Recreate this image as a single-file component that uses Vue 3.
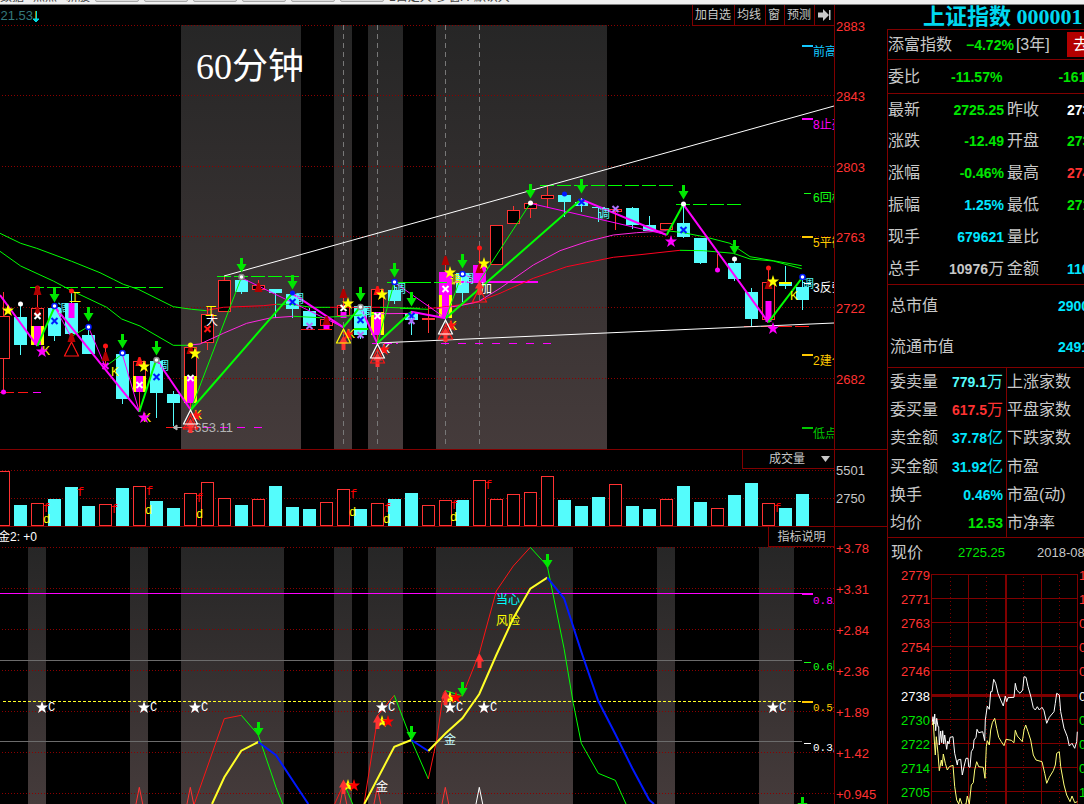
<script setup>
const cx = (i) => 3.5 + 17 * i

// [kind, body top, body bottom, wick top, wick bottom]
const candles = [
  ['h', 316, 359, 292, 390], ['c', 317, 345, 303, 355], ['h', 308, 345, 287, 345], ['c', 308, 336, 305, 341],
  ['c', 303, 334, 291, 334], ['c', 335, 354, 326, 354], ['h', 353, 354, 345, 367], ['c', 354, 399, 353, 404],
  ['h', 361, 392, 358, 410], ['c', 361, 393, 359, 418], ['c', 394, 403, 391, 426], ['h', 347, 403, 346, 410],
  ['h', 314, 343, 306, 350], ['h', 280, 312, 276, 312], ['c', 280, 292, 277, 294], ['h', 285, 290, 280, 290],
  ['c', 289, 293, 289, 318], ['c', 294, 309, 293, 318], ['c', 311, 326, 308, 326], ['h', 319, 326, 315, 326],
  ['h', 305, 316, 298, 316], ['c', 306, 335, 306, 339], ['h', 289, 335, 287, 343], ['c', 290, 301, 282, 304],
  ['c', 313, 320, 311, 335], ['h', 318, 320, 304, 333], ['m', 272, 318, 260, 318], ['c', 273, 293, 273, 302],
  ['m', 265, 282, 248, 282], ['h', 225, 265, 225, 265], ['h', 210, 224, 206, 224], ['h', 203, 209, 203, 218],
  ['h', 195, 199, 186, 208], ['c', 195, 202, 194, 217], ['c', 202, 206, 198, 212], ['c', 207, 208, 207, 222],
  ['h', 209, 212, 209, 230], ['c', 208, 225, 207, 229], ['c', 225, 231, 216, 231], ['h', 223, 230, 223, 230],
  ['c', 223, 237, 204, 238], ['c', 238, 263, 238, 264], ['h', 263, 264, 254, 270], ['c', 263, 279, 260, 281],
  ['c', 292, 319, 288, 326], ['h', 282, 320, 268, 320], ['c', 282, 286, 266, 289], ['c', 287, 300, 278, 310],
]
// [index, top, bottom] of the yellow part of a candle
const cores = [[2, 326, 345], [8, 376, 392], [11, 376, 403], [22, 312, 335], [26, 295, 318]]
const slivers = [[4, 303, 318], [45, 301, 322], [20, 312, 318], [19, 324, 329], [26, 295, 318]]

const volumes = [
  471, 505, 503, 499, 487, 506, 504, 488, 486, 501, 508, 493, 482, 498, 505, 499, 486, 507, 509, 502, 489, 509, 503, 499,
  493, 505, 500, 500, 480, 499, 494, 492, 476, 500, 506, 497, 484, 506, 509, 499, 486, 502, 508, 495, 483, 503, 508, 494,
]
const hollow = (i) => candles[i][0] !== 'c'
const volF = [[43, 512], [77, 496], [111, 513], [146, 495], [196, 502], [350, 498], [384, 512], [451, 509], [485, 489], [774, 512]]
const volD = [[43, 523], [145, 514], [196, 518], [349, 516], [383, 523], [450, 521]]

const bands = [[181, 120], [334, 18], [368, 35], [436, 171]]
const lowBands = [[28, 18], [130, 18], [181, 103], [334, 18], [368, 35], [436, 137], [657, 18], [759, 35]]

const G = '#00ff00', M = '#ff00ff', R = '#ff1414', Y = '#ffff00', W = '#ffffff', C = '#54fcfc', B = '#0018ff'

// Points are kept in thirds of a unit, relative to an origin.
const line = (ox, oy, p) => p.map(([x, y]) => `${(ox + x / 3).toFixed(1)},${(oy + y / 3).toFixed(1)}`).join(' ')
const L = (c, w, ox, oy, ...p) => ({ c, w, p: line(ox, oy, p) })

const averages = [
  L(G, 1, 0, 220, [0, 40], [62, 70], [110, 85], [215, 124], [300, 158], [340, 178], [370, 193], [415, 208], [520, 260], [575, 268], [620, 272]),
  L(G, 1, 0, 220, [0, 94], [62, 138], [160, 183], [215, 212], [320, 262], [365, 297], [420, 318], [520, 376], [575, 376]),
  L('#ff0020', 1, 180, 220, [80, 271], [130, 262], [250, 257], [290, 253]),
  L(G, 1, 180, 220, [290, 253], [330, 253], [395, 262], [450, 262]),
  L('#ff0020', 1, 180, 220, [450, 262], [600, 262]),
  L(G, 1, 180, 220, [600, 262], [720, 265]),
  L('#ff28e0', 1, 180, 220, [20, 376], [60, 372], [130, 340], [200, 310], [270, 294], [340, 289]),
  L(G, 1, 180, 220, [340, 289], [420, 293], [500, 288], [600, 281]),
  L('#ff28e0', 1, 180, 220, [600, 281], [720, 280]),
  L(G, 1, 400, 160, [0, 445], [85, 448]),
  L('#ff0020', 1, 400, 160, [85, 446], [140, 440], [225, 428], [300, 400], [400, 355], [500, 320], [640, 292], [720, 284], [840, 271]),
  L('#ff28e0', 1, 400, 160, [110, 446], [180, 437], [235, 425], [300, 385], [400, 315], [480, 272], [560, 245], [640, 225], [710, 218], [800, 212]),
  L(G, 1, 600, 160, [200, 212], [250, 218], [320, 232], [390, 250], [450, 290], [520, 302], [605, 317]),
  L(G, 1, 600, 160, [240, 271], [310, 272], [400, 280], [450, 297], [520, 303], [605, 326]),
]
const swings = [
  L(M, 1, 0, 220, [164, 260], [213, 350]), L(G, 1, 0, 220, [213, 350], [265, 320]),
  L(M, 1, 0, 220, [265, 320], [316, 440]), L(G, 1, 0, 220, [316, 440], [367, 402]),
  L(M, 1, 0, 220, [367, 402], [418, 575]), L(G, 1, 180, 220, [32, 570], [184, 173]),
  L(M, 1, 180, 220, [184, 173], [490, 322]), L(G, 1, 180, 220, [592, 370], [643, 187]),
  L(M, 1, 180, 220, [643, 187], [797, 295]), L(G, 1, 400, 160, [137, 475], [187, 340]),
  L(M, 1, 400, 160, [187, 340], [237, 366]), L(G, 1, 400, 160, [237, 366], [391, 130]),
  L(M, 1, 400, 160, [391, 130], [800, 224]),
  L(M, 2, 0, 220, [0, 225], [112, 378]), L(G, 2, 0, 220, [112, 378], [164, 260]),
  L(M, 2, 0, 220, [164, 260], [418, 575]), L(G, 2, 0, 220, [418, 575], [469, 418]),
  L(M, 2, 0, 220, [469, 418], [571, 568]), L(G, 2, 180, 220, [32, 570], [337, 220]),
  L(M, 2, 180, 220, [337, 220], [490, 322]), L(G, 2, 180, 220, [490, 322], [541, 260]),
  L(M, 2, 180, 220, [541, 260], [592, 370]), L(G, 2, 180, 220, [592, 370], [694, 275]),
  L(M, 2, 180, 220, [694, 275], [797, 295]), L(G, 2, 400, 160, [137, 475], [544, 118]),
  L(M, 2, 400, 160, [544, 118], [800, 225]), L(G, 2, 600, 160, [200, 225], [250, 133]),
  L(M, 2, 600, 160, [250, 133], [505, 487]), L(G, 2, 600, 160, [505, 487], [605, 355]),
]
// [colour, x1, x2, y, dash, width]
const levels = [
  [G, 30, 163, 287.5, '14 3', 1], [G, 217, 299, 276.5, '14 3', 1], [G, 387, 418, 282.5, '14 3', 1],
  [G, 400, 447, 282.5, '14 3', 1], [G, 540, 673, 185.5, '14 3', 1], [G, 676, 741, 204.5, '14 3', 1],
  [R, 0, 28, 392.5, '14 4', 1], [M, 33, 41, 392.5, '', 1], [R, 166, 200, 427.5, '', 1], [M, 203, 262, 427.5, '8 9', 1],
  [R, 301, 334, 329.5, '14 3', 1], [M, 455, 538, 282, '', 2], [M, 441, 551, 343.5, '8 9', 1],
  [R, 744, 809, 326.5, '14 3', 1], [G, 354, 368, 329, '', 2], [M, 372, 398, 343.5, '8 4', 1],
]
const red = '#b00000'
// [symbol, x, y, colour]
const marks = [
  ['star', 8, 310, Y], ['dot', 20.5, 304, W], ['dot', 3.5, 392, M], ['dot', 37.5, 288, R], ['tree', 37.5, 291, red], ['tree', 37.5, 312, red], ['x', 37.5, 316, W],
  ['star', 42, 351, M], ['x', 54.5, 321, B], ['ring', 54.5, 306, B], ['down', 54.5, 295, ''], ['dot', 71.5, 291, R],
  ['tri', 71.5, 349, R], ['tree', 71.5, 338, red], ['ring', 88.5, 327, B], ['down', 88.5, 314, ''], ['dot', 105.5, 346, R],
  ['tree', 105.5, 357, red], ['x', 105.5, 366, M], ['ring', 122.5, 353, B], ['down', 122.5, 341, ''], ['x', 139.5, 385, W],
  ['tree', 139.5, 362, R], ['star', 144, 366, Y], ['star', 144, 417, M], ['ring', 156.5, 360, '#888'], ['down', 156.5, 348, ''], ['x', 156.5, 377, B],
  ['tree', 190.5, 350, red], ['dot', 190.5, 345, Y], ['x', 190.5, 378, W], ['star', 195, 353, Y], ['star', 196, 415, R],
  ['up', 190.5, 426, ''], ['tri', 190.5, 422, R], ['tri', 190.5, 417, W], ['x', 207.5, 329, R],
  ['ring', 241.5, 277, '#888'], ['down', 241.5, 265, ''], ['tree', 258.5, 288, red], ['dot', 292.5, 293, B], ['x', 292.5, 302, B], ['down', 292.5, 282, ''],
  ['x', 309.5, 326, '#b070ff'], ['tree', 326.5, 321, red], ['tree', 343.5, 294, red], ['x', 343.5, 308, W], ['star', 348, 303, Y],
  ['star', 348, 334, R], ['up', 343.5, 343, ''], ['tri', 343.5, 336, Y], ['ring', 360.5, 307, '#888'], ['down', 360.5, 294, ''], ['x', 360.5, 320, B], ['x', 360.5, 335, '#b070ff'],
  ['tree', 377.5, 291, R], ['x', 377.5, 316, W], ['star', 382, 294, Y], ['star', 384, 349, R], ['up', 377.5, 360, ''], ['tri', 377.5, 356, R], ['tri', 377.5, 351, W],
  ['ring', 394.5, 282, B], ['down', 394.5, 270, ''], ['down', 411.5, 299, ''], ['x', 411.5, 316, B], ['x', 411.5, 321, '#b070ff'],
  ['tree', 445.5, 261, red], ['x', 445.5, 289, W], ['star', 450, 272, Y], ['star', 451, 325, R], ['up', 445.5, 335, ''], ['tri', 445.5, 332, R], ['tri', 445.5, 327, W],
  ['ring', 462.5, 274, B], ['down', 462.5, 261, ''], ['dot', 479.5, 248, R], ['tree', 479.5, 269, red], ['star', 484, 263, Y], ['tri', 479.5, 295, R], ['up', 479.5, 288, ''],
  ['dot', 530.5, 203, W], ['down', 530.5, 191, ''], ['dot', 564.5, 194, B], ['down', 581.5, 186, ''], ['x', 581.5, 202, B], ['x', 615.5, 209, '#b070ff'],
  ['star', 671, 241, M], ['dot', 683.5, 204, W], ['x', 683.5, 230, B], ['down', 683.5, 192, ''], ['dot', 717.5, 270, M],
  ['dot', 734.5, 259, W], ['down', 734.5, 247, ''], ['dot', 768.5, 268, R], ['tree', 768.5, 285, red], ['star', 773, 281, Y], ['star', 773, 328, M],
  ['ring', 802.5, 277, B],
]
const big = (k) => ['down', 'up', 'tri'].includes(k)
// [text, x, baseline, colour]
const notes = [
  ['调', 57, 313, C], ['工', 69, 302, Y], ['K', 42, 355, Y], ['K', 111, 376, Y], ['K', 143, 422, Y], ['调', 157, 370, C], ['K', 194, 419, Y],
  ['工', 205, 316, Y], ['大', 206, 325, W], ['调', 292, 303, C], ['调', 360, 316, C], ['调', 394, 293, C], ['K', 347, 338, Y], ['K', 382, 353, W], ['K', 449, 330, Y],
  ['调', 450, 284, Y], ['调', 462, 283, C], ['加', 480, 293, W], ['调', 598, 218, C], ['K', 790, 300, Y], ['调', 802, 288, C],
]
const stages = [
  ['前高', 56, 46, '#14c8ff', 2], ['8止盈', 129, 119, M, 2], ['6回档', 202, 193.5, '#14ff14', 1], ['5平衡', 247, 237, '#ffc800', 2],
  ['3反弹', 292, 283.5, W, 1], ['2建仓', 365, 355, '#ffc800', 2], ['低点', 438, 428, '#00c800', 2],
]
const ratios = [['0.8止', 604, 594, M, 2], ['0.6回', 670, 662.5, '#14ff14', 1], ['0.5平', 711, 702, '#ffc800', 2], ['0.3反', 751, 743.5, W, 1]]
const priceAxis = [[2883, 25.5], [2843, 95.5], [2803, 166.5], [2763, 236.5], [2722, 307.5], [2682, 378.5]]
const oscAxis = [['+3.78', 547.5], ['+3.31', 588.5], ['+2.84', 629.5], ['+2.36', 670.5], ['+1.89', 711.5], ['+1.42', 752.5], ['+0.945', 793.5]]

const osc = [
  L(R, 1, 0, 680, [583, 372], [673, 116], [724, 106]),
  L(G, 1, 0, 680, [724, 106], [775, 165], [828, 322], [848, 372]),
  L('#ffff28', 2, 0, 680, [636, 372], [673, 292], [724, 212], [775, 186]),
  L(B, 2, 0, 680, [775, 186], [828, 226], [925, 372]),
  L(R, 1, 0, 680, [1004, 372], [1028, 318], [1036, 320]), L(G, 1, 0, 680, [1036, 320], [1058, 372]),
  L(R, 1, 0, 680, [1092, 372], [1134, 106], [1183, 46]), L(G, 1, 0, 680, [1183, 46], [1234, 180], [1285, 297]),
  L('#ffff28', 2, 0, 680, [1093, 372], [1183, 200], [1234, 180]), L(B, 2, 0, 680, [1234, 180], [1285, 213]),
  L(R, 1, 380, 530, [145, 747], [170, 630], [190, 490], [197, 480]), L(G, 1, 380, 530, [197, 482], [247, 498]),
  L(R, 1, 380, 530, [247, 498], [298, 370], [349, 183], [400, 108], [451, 52]),
  L(G, 1, 380, 530, [451, 52], [502, 108], [552, 355], [580, 520], [604, 640], [655, 730], [706, 751], [738, 822]),
  L('#ffff28', 2, 380, 530, [145, 663], [197, 610], [247, 565], [298, 492], [349, 375], [400, 265], [451, 176], [502, 143]),
  L(B, 2, 380, 530, [502, 143], [552, 205], [604, 365], [655, 513], [706, 612], [757, 715], [808, 810], [822, 822]),
  ...[418, 571, 1030, 1132, 1336].map((x) => L('#ff3232', 1, 0, 680, [x - 10, 372], [x, 322], [x + 10, 372])),
  L(W, 1, 0, 680, [1428, 372], [1438, 322], [1448, 372]),
]
const oscMarks = [
  ['down', 258.5, 729], ['down', 411.5, 733], ['down', 547.5, 561], ['down', 462.5, 689], ['down', 802.5, 804],
  ['star', 348, 785, Y], ['star', 354, 785, '#ff0000'], ['star', 382, 721, Y], ['star', 388, 721, '#ff0000'], ['star', 450, 697, Y], ['star', 456, 697, '#ff0000'],
  ['up', 343.5, 787], ['up', 377.5, 722], ['up', 445.5, 698], ['up', 479.5, 661],
  ...[42, 144, 195, 382, 450, 484, 773].map((x) => ['star', x, 707, W]),
]
const cMarks = [48, 150, 201, 388, 456, 490, 779]

const quote = [
  ['最新', '2725.25', 'g', '昨收', '2738', 'w'], ['涨跌', '-12.49', 'g', '开盘', '2736', 'g'],
  ['涨幅', '-0.46%', 'g', '最高', '2744', 'r'], ['振幅', '1.25%', 'c', '最低', '2710', 'g'],
  ['现手', '679621', 'c', '量比', '', 'g'], ['总手', '10976万', 's', '金额', '1162亿', 'c'],
]
const caps = [['总市值', '29003亿'], ['流通市值', '24917亿']]
const flows = [
  ['委卖量', '779.1万', 'a', '上涨家数'], ['委买量', '617.5万', 'r', '平盘家数'], ['卖金额', '37.78亿', 'c', '下跌家数'],
  ['买金额', '31.92亿', 'c', '市盈'], ['换手', '0.46%', 'c', '市盈(动)'], ['均价', '12.53', 'g', '市净率'],
]
const splitUnit = (v) => [v.replace(/[万亿]/, ''), (v.match(/[万亿]/) || [''])[0]]

const dayAxis = [
  [2779, 574.5, '1', 'r'], [2771, 598.5, '1', 'r'], [2763, 622.5, '0', 'r'], [2754, 646.5, '0', 'r'], [2746, 670.5, '0', 'r'],
  [2738, 695.5, '0', 'w'], [2730, 719.5, '0', 'g'], [2722, 743.5, '0', 'g'], [2714, 767.5, '0', 'g'], [2705, 791.5, '1', 'g'],
]
const dayPrice = line(884, 540, [
  [145, 545], [147, 530], [150, 552], [152, 522], [155, 572], [158, 535], [162, 560], [164, 560], [166, 615], [170, 573], [173, 608], [176, 572], [179, 612], [182, 585], [188, 628], [191, 603], [195, 612], [198, 592], [207, 590], [212, 640], [220, 675],
  [222, 660], [230, 658], [235, 705], [240, 680], [246, 655], [252, 655], [254, 680], [258, 682], [262, 635], [268, 625], [270, 600], [276, 592], [279, 568], [284, 578], [296, 575], [302, 602],
  [304, 540], [310, 498], [316, 508], [320, 455], [324, 455], [329, 418], [335, 430], [342, 460], [350, 480], [358, 498], [364, 468], [368, 485], [372, 473], [390, 472],
  [394, 430], [398, 450], [408, 460], [416, 450], [420, 410], [426, 412], [432, 440], [440, 468], [448, 503], [454, 510], [460, 500], [466, 510],
  [474, 502], [480, 512], [488, 550], [496, 532], [510, 515], [514, 490], [518, 460], [526, 465], [530, 515], [540, 565], [550, 590], [556, 618], [564, 610],
  [572, 625], [578, 605], [580, 575],
])
const dayMean = line(884, 540, [
  [145, 555], [148, 540], [151, 600], [154, 645], [157, 590], [162, 640], [166, 692], [172, 660], [175, 678], [178, 642], [184, 670], [190, 690], [196, 680], [207, 676], [212, 740], [218, 780],
  [224, 792], [228, 775], [235, 795], [246, 792], [250, 768], [256, 792], [262, 735], [268, 728], [272, 690], [278, 665], [284, 680], [298, 682], [303, 715],
  [307, 620], [310, 602], [316, 615], [320, 570], [325, 548], [332, 535], [338, 565], [344, 592], [352, 605], [360, 617], [366, 598], [382, 601], [390, 608],
  [394, 571], [400, 588], [415, 605], [420, 570], [425, 555], [432, 575], [440, 600], [448, 645], [456, 660], [474, 665], [482, 700], [488, 730],
  [496, 712], [508, 692], [514, 675], [518, 640], [526, 635], [530, 680], [540, 735], [548, 765], [558, 785], [564, 768], [572, 788], [580, 785],
])
</script>

<template>
  <div class="app">
    <header class="strip">
      <span>数据</span><span>点点</span><span>新股</span>
      <i class="tab"></i><i class="tab"></i><i class="tab"></i><i class="tab"></i><i class="tab"></i><i class="tab"></i>
      <span>1自定大</span><span>多窗A</span><span>默认大</span>
    </header>
    <div class="body">
      <main class="charts">
        <section class="pane">
          <svg class="plot" viewBox="0 5 887 445">
            <defs>
              <linearGradient id="shade" x1="0" y1="0" x2="0" y2="1">
                <stop offset="0" stop-color="#262626" /><stop offset="1" stop-color="#453b3b" />
              </linearGradient>
              <symbol id="star" viewBox="-7 -7 14 14"><path fill="currentColor" d="M0-6 1.5-1.5H6L2.4 1.4 4 6 0 3.3-4 6-2.4 1.4-6-1.5H-1.5Z" /></symbol>
              <symbol id="down" viewBox="-8 -8 16 16"><path fill="#00e600" d="M-1.5-7h3v6h3.500L0 7.500-5-1h3.500Z" /></symbol>
              <symbol id="up" viewBox="-8 -8 16 16"><path fill="#ff3232" d="M0-7.500 4.500.500h-2.500V7h-4V.500h-2.500Z" /></symbol>
              <symbol id="x" viewBox="-7 -7 14 14"><path stroke="currentColor" stroke-width="2" d="M-3-3 3 3M3-3-3 3" /></symbol>
              <symbol id="dot" viewBox="-7 -7 14 14"><circle r="2.500" fill="currentColor" /></symbol>
              <symbol id="ring" viewBox="-7 -7 14 14"><circle r="2.500" fill="#fff" stroke="currentColor" stroke-width="1.500" /></symbol>
              <symbol id="tree" viewBox="-7 -7 14 14"><path fill="currentColor" d="M-1-5H1L4 4H-4Z" /></symbol>
              <symbol id="tri" viewBox="-8 -8 16 16"><path fill="none" stroke="currentColor" stroke-width="1.200" d="M0-7 7 7H-7Z" /></symbol>
            </defs>
            <rect v-for="b in bands" :key="b[0]" :x="b[0]" y="25" :width="b[1]" height="424" fill="url(#shade)" />
            <line v-for="a in priceAxis" :key="a[0]" x1="2" x2="834" :y1="a[1]" :y2="a[1]" class="grid" />
            <line v-for="x in [343.5, 377.5, 445.5, 479.5]" :key="x" :x1="x" :x2="x" y1="25" y2="448" class="cursor" />
            <g v-for="(k, i) in candles" :key="i">
              <line :x1="cx(i)" :x2="cx(i)" :y1="k[3]" :y2="k[4]" :stroke="k[0] === 'c' ? C : '#ff3232'" />
              <rect v-if="k[0] === 'c'" :x="cx(i) - 6.5" :y="k[1]" width="13" :height="k[2] - k[1]" :fill="C" />
              <rect v-else-if="k[0] === 'm'" :x="cx(i) - 6.5" :y="k[1]" width="13" :height="k[2] - k[1]" :fill="M" />
              <rect v-else :x="cx(i) - 6" :y="k[1] + 0.5" width="12" :height="k[2] - k[1] - 1" fill="#000" stroke="#ff3232" />
            </g>
            <rect v-for="k in cores" :key="'k' + k[0]" :x="cx(k[0]) - 6.5" :y="k[1]" width="13" :height="k[2] - k[1]" :fill="Y" />
            <rect v-for="k in cores" :key="'j' + k[0]" :x="cx(k[0]) - 3.5" :y="k[1]" width="7" :height="k[2] - k[1]" :fill="M" />
            <rect v-for="k in slivers" :key="'s' + k[0]" :x="cx(k[0]) - 3" :y="k[1]" width="6" :height="k[2] - k[1]" :fill="M" />
            <rect x="779" y="282" width="12" height="2" :fill="Y" />
            <line v-for="(l, i) in levels" :key="'l' + i" :x1="l[1]" :x2="l[2]" :y1="l[3]" :y2="l[3]" :stroke="l[0]" :stroke-dasharray="l[4]" :stroke-width="l[5]" />
            <polyline v-for="(l, i) in averages" :key="'a' + i" :points="l.p" :stroke="l.c" :stroke-width="l.w" fill="none" />
            <path d="M224 276 834 106M377 343 834 323" stroke="#fff" />
            <polyline v-for="(l, i) in swings" :key="'w' + i" :points="l.p" :stroke="l.c" :stroke-width="l.w" fill="none" />
            <text v-for="(n, i) in notes" :key="'n' + i" :x="n[1]" :y="n[2]" :fill="n[3]" class="cn">{{ n[0] }}</text>
            <text x="187" y="432" class="num" fill="#b4b4b4">2653.11</text>
            <path d="M173 427.500 177 425v5ZM177 427.500H182" stroke="#b4b4b4" fill="#b4b4b4" />
            <use v-for="(m, i) in marks" :key="'m' + i" :href="'#' + m[0]" :x="m[1] - (big(m[0]) ? 8 : 7)" :y="m[2] - (big(m[0]) ? 8 : 7)" :width="big(m[0]) ? 16 : 14" :height="big(m[0]) ? 16 : 14" :color="m[3]" />
            <text x="196" y="79" class="caption">60分钟</text>
            <text x="-14" y="20" class="num" fill="#34787c">2721.53</text>
            <path d="M35.500 11V20" stroke="#948000" /><path d="M36.500 11V20M33 19h6l-3 3Z" stroke="#00d8e0" fill="#00d8e0" />
            <g v-for="s in stages" :key="s[0]">
              <line :x1="s[4] === 2 ? 802 : 804" :x2="s[4] === 2 ? 813 : 811" :y1="s[2]" :y2="s[2]" :stroke="s[3]" :stroke-width="s[4]" />
              <text x="813" :y="s[1]" :fill="s[3]" class="cn">{{ s[0] }}</text>
            </g>
            <rect x="834" y="5" width="53" height="445" fill="#000" />
            <text v-for="a in priceAxis" :key="'t' + a[0]" x="836" :y="a[1] + 5" class="num" fill="#ff3232">{{ a[0] }}</text>
            <path d="M834.500 5V450M0 449.500H887" class="frame" />
          </svg>
          <nav class="tools">
            <button type="button">加自选</button>
            <button type="button">均线</button>
            <button type="button">窗</button>
            <button type="button">预测</button>
            <button type="button" aria-label="跳到最后">
              <svg width="13" height="12" viewBox="0 0 13 12"><path fill="#c8c8c8" d="M0 3.500h5V0l6 6-6 6V8.500H0ZM11 1h1.500v10H11Z" /></svg>
            </button>
          </nav>
        </section>

        <section class="pane">
          <svg class="plot" viewBox="0 450 887 77">
            <path d="M2 470.500H834M2 498.500H834" class="grid" />
            <g v-for="(v, i) in volumes" :key="i">
              <rect v-if="hollow(i)" :x="cx(i) - 6" :y="v + 0.5" width="12" :height="525 - v" fill="#000" stroke="#ff3232" />
              <rect v-else :x="cx(i) - 6.5" :y="v" width="13" :height="526 - v" :fill="C" />
            </g>
            <text v-for="f in volF" :key="'f' + f[0]" :x="f[0]" :y="f[1]" class="tick" fill="#ff0000">f</text>
            <text v-for="d in volD" :key="'d' + d[0]" :x="d[0]" :y="d[1]" class="tick" fill="#ffff00">d</text>
            <text x="836" y="475" class="num" fill="#c8c8c8">5501</text>
            <text x="836" y="503" class="num" fill="#c8c8c8">2750</text>
            <path d="M834.500 450V527M0 526.500H887" class="frame" />
          </svg>
          <label class="picker">
            <select aria-label="指标"><option>成交量</option></select>
            <svg width="9" height="6" viewBox="0 0 9 6"><path fill="#c8c8c8" d="M0 0H9L4.500 6Z" /></svg>
          </label>
        </section>

        <section class="pane">
          <svg class="plot" viewBox="0 527 887 277">
            <rect v-for="b in lowBands" :key="b[0]" :x="b[0]" y="547" :width="b[1]" height="257" fill="url(#shade)" />
            <line v-for="a in oscAxis" :key="a[0]" x1="2" x2="834" :y1="a[1]" :y2="a[1]" class="grid" />
            <path d="M0 660.500H802M0 741.500H802" stroke="#6c6c6c" />
            <path d="M0 593.500H802" stroke="#ff00ff" />
            <path d="M3 701.500H802" stroke="#ffff28" stroke-dasharray="3 2" />
            <polyline v-for="(l, i) in osc" :key="'o' + i" :points="l.p" :stroke="l.c" :stroke-width="l.w" fill="none" />
            <use v-for="(m, i) in oscMarks" :key="'m' + i" :href="'#' + m[0]" :x="m[1] - (big(m[0]) ? 8 : 7)" :y="m[2] - (big(m[0]) ? 8 : 7)" :width="big(m[0]) ? 16 : 14" :height="big(m[0]) ? 16 : 14" :color="m[3]" />
            <text v-for="x in cMarks" :key="'c' + x" :x="x" y="711" class="tick" fill="#fff">C</text>
            <text x="376" y="791" class="cn" fill="#fff">金</text>
            <text x="444" y="744" class="cn" fill="#c8ffff">金</text>
            <text x="496" y="604" class="cn" fill="#00ffff">当心</text>
            <text x="496" y="625" class="cn" fill="#ffff00">风险</text>
            <text x="-2" y="541" class="cn" fill="#fff">金2: +0</text>
            <g v-for="s in ratios" :key="s[0]">
              <line :x1="s[4] === 2 ? 802 : 804" :x2="s[4] === 2 ? 813 : 811" :y1="s[2]" :y2="s[2]" :stroke="s[3]" :stroke-width="s[4]" />
              <text x="813" :y="s[1]" :fill="s[3]" class="ratio-tag">{{ s[0] }}</text>
            </g>
            <rect x="834" y="527" width="53" height="277" fill="#000" />
            <text v-for="a in oscAxis" :key="'t' + a[0]" x="836" :y="a[1] + 5" class="num" fill="#ff3232">{{ a[0] }}</text>
            <path d="M834.500 527V804" class="frame" />
          </svg>
          <button type="button" class="explain">指标说明</button>
        </section>
      </main>

      <aside class="side">
        <h1>上证指数 000001</h1>
        <div class="row fund"><span>添富指数</span><b class="g">−4.72%</b><span class="term">[3年]</span><button type="button">去看</button></div>
        <div class="row ratio"><span>委比</span><b class="g">-11.57%</b><b class="g diff">-1616</b></div>
        <table class="quote">
          <tbody>
            <tr v-for="q in quote" :key="q[0]">
              <th>{{ q[0] }}</th><td :class="q[2]">{{ splitUnit(q[1])[0] }}<i>{{ splitUnit(q[1])[1] }}</i></td>
              <th>{{ q[3] }}</th><td class="far" :class="q[5]">{{ q[4] }}</td>
            </tr>
          </tbody>
        </table>
        <table class="caps">
          <tbody><tr v-for="q in caps" :key="q[0]"><th>{{ q[0] }}</th><td class="far c">{{ q[1] }}</td></tr></tbody>
        </table>
        <table class="flows">
          <tbody>
            <tr v-for="q in flows" :key="q[0]">
              <th>{{ q[0] }}</th><td :class="q[2]">{{ splitUnit(q[1])[0] }}<i>{{ splitUnit(q[1])[1] }}</i></td><th class="second">{{ q[3] }}</th>
            </tr>
          </tbody>
        </table>
        <div class="low">
          <div class="now"><span>现价</span><span class="g">2725.25</span><span class="date">2018-08-20</span></div>
          <svg class="plot" viewBox="888 566 196 238">
            <path v-for="a in dayAxis" :key="a[0]" :d="`M931 ${a[1]}H1078`" stroke="#800000" :stroke-width="a[0] === 2738 ? 3 : 1" />
            <path d="M931.500 574V804M968.500 574V804M1041.500 574V804M1077.500 574V804" stroke="#800000" />
            <path d="M1006 574V804" stroke="#800000" stroke-width="2" />
            <path d="M950.500 577V804M986.500 577V804M1023.500 577V804M1059.500 577V804" stroke="#800000" stroke-dasharray="1 3" />
            <polyline :points="dayMean" fill="none" stroke="#ffff78" />
            <polyline :points="dayPrice" fill="none" stroke="#fff" />
            <g v-for="a in dayAxis" :key="'t' + a[0]" :class="a[3]">
              <text x="930" :y="a[1] + 5" text-anchor="end" class="num" fill="currentColor">{{ a[0] }}</text>
              <text x="1079" :y="a[1] + 5" class="num" fill="currentColor">{{ a[2] }}.5</text>
            </g>
          </svg>
        </div>
      </aside>
    </div>
  </div>
</template>

<style>
body { background: #000; overflow: hidden; }
</style>

<style scoped>
.app { background: #000; color: #c8c8c8; font: 12px/16px "Liberation Sans", "Noto Sans CJK SC", sans-serif; }
.strip { display: flex; align-items: flex-end; gap: 5px; height: 4px; overflow: hidden; background: #f0f0f0; border-bottom: 1px solid #808080; color: #444; white-space: nowrap; }
.strip span { flex: none; line-height: 14px; }
.strip span:nth-child(-n+2) { margin-right: 4px; }
.tab { flex: none; width: 42px; height: 10px; margin-bottom: 2px; border: 1px solid #a8a8a8; border-radius: 2px; background: #dcdcdc; }
.body { display: flex; align-items: flex-start; }
.charts { flex: 1; min-width: 0; }
.pane { position: relative; }
.plot { display: block; width: 100%; overflow: hidden; }
.grid { stroke: #8c0000; stroke-dasharray: 1 2; fill: none; }
.frame { stroke: #800000; fill: none; }
.cursor { stroke: #787878; stroke-dasharray: 5 4; }
.num { font: 13px "Liberation Sans", sans-serif; }
.cn { font: 12px "Liberation Sans", "Noto Sans CJK SC", sans-serif; }
.ratio-tag { font: 11px "Liberation Mono", "Noto Sans CJK SC", monospace; }
.tick { font: 12px "Liberation Mono", monospace; }
.caption { font: 36px "Liberation Serif", "Noto Sans CJK SC", serif; fill: #fff; }
button, select { font: inherit; color: #c8c8c8; background: #000; border: 0; border-radius: 0; margin: 0; padding: 0; }
.tools { position: absolute; top: 0; right: 53px; display: flex; height: 20px; border-bottom: 1px solid #800000; }
.tools button { padding: 0 3px 0 2px; border-left: 1px solid #800000; display: flex; align-items: center; }
.tools button:nth-child(2), .tools button:nth-child(3) { padding: 0 4px 0 2px; }
.tools button:last-child { padding: 0 3px; }
.picker { position: absolute; top: 0; right: 53px; display: flex; align-items: center; width: 92px; height: 19px; box-sizing: border-box; padding: 0 4px 0 26px; border: solid #800000; border-width: 0 0 1px 1px; background: #000; }
.picker select { flex: 1; appearance: none; outline: 0; }
.explain { position: absolute; top: 0; right: 53px; width: 66px; height: 20px; border: solid #800000; border-width: 0 0 1px 1px; }

.side { flex: none; width: 197px; overflow: hidden; box-sizing: border-box; font-size: 16px; white-space: nowrap; }
h1 { margin: 0; padding-left: 36px; font: bold 22px/24px "Liberation Serif", "Noto Sans CJK SC", serif; color: #00d8f0; }
.row, .quote, .caps, .flows { border-top: 1px solid #800000; border-left: 1px solid #800000; }
.row { display: flex; align-items: center; box-sizing: border-box; }
.row b { font-size: 14px; }
.fund { height: 30px; }
.fund b { margin-left: 14px; }
.term { margin-left: 2px; }
.fund button { margin-left: auto; flex: none; width: 17px; height: 25px; padding-left: 6px; background: #b40000; color: #fff; overflow: hidden; text-align: left; }
.ratio { height: 34px; }
.ratio b { margin-left: 31px; }
.ratio .diff { margin-left: 56px; }
table { width: 197px; border-spacing: 0; table-layout: fixed; }
th, td { padding: 0; font-weight: normal; text-align: left; overflow: visible; }
td { font-size: 14px; font-weight: bold; text-align: right; }
td i { font-style: normal; font-weight: normal; font-size: 16px; }
.far { text-align: left; }
.quote tr { height: 32px; }
.quote tr:first-child, .quote tr:last-child { height: 31px; }
.quote th:first-child { width: 46px; }
.quote td:nth-child(2) { width: 70px; }
.quote th:nth-child(3) { width: 60px; padding-left: 3px; }
.caps { height: 83px; }
.caps th { width: 168px; padding-left: 2px; }
.flows { height: 170px; }
.flows th { width: 50px; padding-left: 2px; }
.flows td { width: 63px; padding-right: 3px; }
.flows .second { width: 77px; padding-left: 0; border-left: 1px solid #800000; }
.low { border-left: 1px solid #800000; }
.now { display: flex; align-items: center; height: 28px; border-top: 1px solid #800000; padding: 2px 0 0 3px; box-sizing: content-box; height: 26px; }
.now .g { margin-left: 35px; font-size: 13px; }
.now .date { margin-left: 32px; font-size: 13px; }
.g { color: #00e600; }
.r { color: #ff3232; }
.w { color: #fff; }
.c { color: #00e6ff; }
.a { color: #54fcfc; }
.s { color: #c8c8c8; }
</style>
